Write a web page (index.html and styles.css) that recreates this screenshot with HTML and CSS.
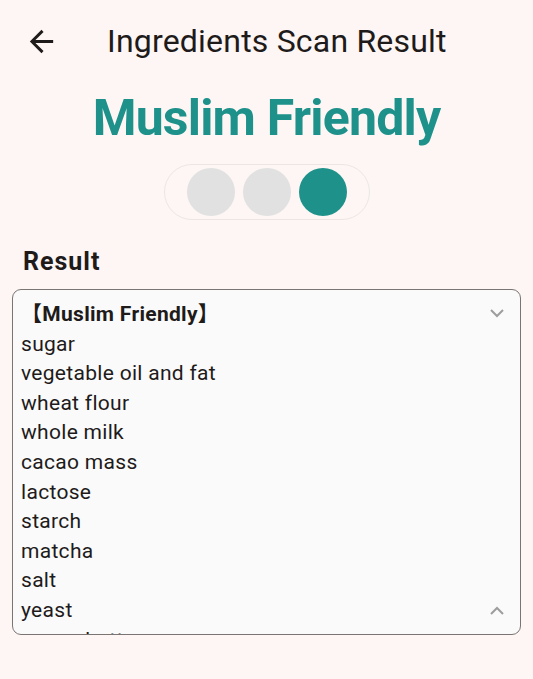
FILE: index.html
```html
<!DOCTYPE html>
<html lang="en">
<head>
    <meta charset="UTF-8">
    <meta name="viewport" content="width=device-width, initial-scale=1.0">
    <title>Ingredients Scan Result</title>
    <link rel="stylesheet" href="styles.css">
</head>
<body>

    <header class="app-bar">
        <button class="back-button" aria-label="Back">
            <svg viewBox="0 0 24 24" width="35" height="35">
                <path d="M20 11H7.83l5.59-5.59L12 4l-8 8 8 8 1.41-1.41L7.83 13H20v-2z" fill="currentColor"/>
            </svg>
        </button>
        <h1 class="app-title">Ingredients Scan Result</h1>
    </header>

    <main class="content">
        <h2 class="verdict">Muslim Friendly</h2>

        <!-- 信号灯 -->
        <div class="signal">
            <span class="light"></span>
            <span class="light"></span>
            <span class="light on"></span>
        </div>

        <h3 class="section-title">Result</h3>

        <div class="result-box">
            <div class="result-list">
                <p class="group">【Muslim Friendly】</p>
                <p>sugar</p>
                <p>vegetable oil and fat</p>
                <p>wheat flour</p>
                <p>whole milk</p>
                <p>cacao mass</p>
                <p>lactose</p>
                <p>starch</p>
                <p>matcha</p>
                <p>salt</p>
                <p>yeast</p>
                <p>cocoa butter</p>
            </div>
            <svg class="chevron chevron-down" viewBox="0 0 16 10" width="16" height="10">
                <path d="M2 2l6 6 6-6" fill="none" stroke="currentColor" stroke-width="2"/>
            </svg>
            <svg class="chevron chevron-up" viewBox="0 0 16 10" width="16" height="10">
                <path d="M2 8l6-6 6 6" fill="none" stroke="currentColor" stroke-width="2"/>
            </svg>
        </div>
    </main>

</body>
</html>
```

FILE: styles.css
```css
body {
    margin: 0;
    background: #fdf6f4;
    font-family: Roboto, "Noto Sans CJK SC", sans-serif;
    color: #1e1b1a;
    width: 533px;
    height: 679px;
    overflow: hidden;
}

.app-bar {
    display: flex;
    align-items: center;
    height: 82px;
    padding: 0 24px;
}

.back-button {
    background: none;
    border: none;
    padding: 0;
    width: 35px;
    height: 35px;
    color: #1e1b1a;
    display: flex;
}

.app-title {
    margin: 0 0 0 48px;
    font-size: 32px;
    font-weight: 400;
    letter-spacing: 0.2px;
}

.content {
    display: flex;
    flex-direction: column;
    align-items: center;
}

.verdict {
    margin: 8px 0 0;
    font-size: 50px;
    font-weight: 700;
    line-height: 56px;
    letter-spacing: -0.8px;
    color: #1e918a;
}

.signal {
    display: flex;
    gap: 8px;
    margin-top: 18px;
    padding: 3px 22px;
    border: 1px solid #ebe6e4;
    border-radius: 30px;
}

.light {
    width: 48px;
    height: 48px;
    border-radius: 50%;
    background: #e1e1e1;
}

.light.on {
    background: #1e918a;
}

.section-title {
    align-self: flex-start;
    margin: 25px 0 0 23px;
    font-size: 25px;
    font-weight: 700;
    line-height: 34px;
    letter-spacing: 1px;
}

.result-box {
    position: relative;
    align-self: stretch;
    margin: 10px 12px 0;
    height: 344px;
    border: 1px solid #7a7573;
    border-radius: 9px;
    background: #fafafa;
    overflow: hidden;
}

.result-list {
    padding: 10px 8px 0;
}

.result-list p {
    margin: 0;
    font-size: 21px;
    line-height: 29.6px;
    letter-spacing: 0.3px;
}

.result-list .group {
    font-weight: 700;
}

.chevron {
    position: absolute;
    right: 15px;
    color: #9d9d9d;
}

.chevron-down {
    top: 18px;
}

.chevron-up {
    bottom: 18px;
}
```
